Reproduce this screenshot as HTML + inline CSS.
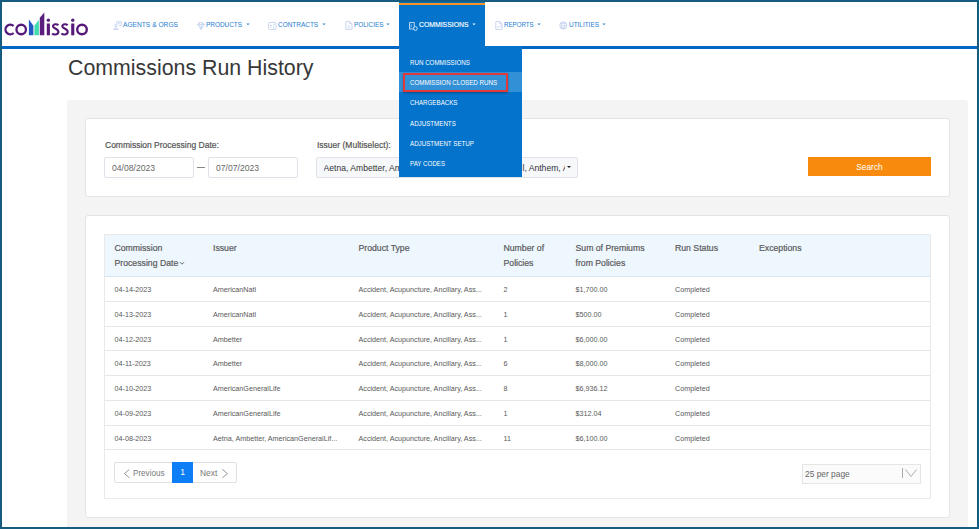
<!DOCTYPE html>
<html><head><meta charset="utf-8">
<style>
*{box-sizing:border-box;margin:0;padding:0}
html,body{width:979px;height:529px;overflow:hidden;background:#fff}
body{font-family:"Liberation Sans",sans-serif;position:relative}
.a{position:absolute;white-space:nowrap}
#frame{position:absolute;left:0;top:0;width:979px;height:529px;border:2px solid #165c80;z-index:50;pointer-events:none}
.nav{font-size:7.3px;color:#2f84d2;top:20.3px;line-height:10px;transform:scaleX(0.9);transform-origin:0 0;-webkit-text-stroke:0.05px #2f84d2}
.ic{position:absolute}
.caret{position:absolute;width:0;height:0;border-left:1.6px solid transparent;border-right:1.6px solid transparent;border-top:2.1px solid #2f84d2;top:23.8px}
.gray{left:67px;top:100px;width:901px;height:440px;background:#f4f4f4;border-radius:3px}
.card{background:#fff;border:1px solid #e4e4e4;border-radius:3px}
.lbl{font-size:8.5px;color:#555;-webkit-text-stroke:0.2px #555;line-height:10px}
.inp{border:1px solid #dfe3e9;border-radius:2px;background:#fff;height:21px;font-size:8.6px;color:#666;line-height:21px;padding-left:7px}
.th{font-size:8.7px;color:#5a5a5a;-webkit-text-stroke:0.2px #5a5a5a;line-height:14.8px}
.td{font-size:7.2px;color:#595959;line-height:10px}
.row{position:absolute;left:105px;width:825px;height:1px;background:#e6e6e6}
.dd{font-size:7px;color:#fff;left:410px;line-height:10px;transform:scaleX(0.885);transform-origin:0 0}
</style></head><body>
<div id="frame"></div>

<!-- header -->
<div class="a" style="left:0;top:46px;width:979px;height:2.6px;background:#0068c4;z-index:9"></div>
<!-- logo -->
<svg class="a" style="left:0;top:0" width="100" height="46" viewBox="0 0 100 46">
  <path d="M13.6 26 A4.8 4.8 0 1 0 13.6 33" fill="none" stroke="#56197a" stroke-width="2.3"/>
  <circle cx="21.2" cy="29.5" r="4.75" fill="none" stroke="#56197a" stroke-width="2.3"/>
  <path d="M28.9 19.4 L33.4 25.8 L33.4 35.3 L28.9 35.3 Z" fill="#2259c2"/>
  <path d="M34.4 25.8 L38.9 19.8 L38.9 35.3 L34.4 35.3 Z" fill="#40dcae"/>
  <path d="M39.8 17.8 L44.3 12.6 L44.3 35.3 L39.8 35.3 Z" fill="#5a1f7c"/>
  <rect x="46.8" y="23.5" width="3.1" height="11.8" fill="#56197a"/>
  <circle cx="48.35" cy="20.2" r="1.65" fill="#56197a"/>
  <rect x="71.2" y="23.5" width="3.1" height="11.8" fill="#56197a"/>
  <circle cx="72.75" cy="20.2" r="1.65" fill="#56197a"/>
  <path d="M58.3 25.2 C57.2 23.9 53.2 23.6 53 26.3 C52.9 28.6 58.4 28.5 58.4 31.8 C58.4 35 53.4 35.1 52.2 33.3" fill="none" stroke="#56197a" stroke-width="2.1"/>
  <path d="M67.6 25.2 C66.5 23.9 62.5 23.6 62.3 26.3 C62.2 28.6 67.7 28.5 67.7 31.8 C67.7 35 62.7 35.1 61.5 33.3" fill="none" stroke="#56197a" stroke-width="2.1"/>
  <circle cx="82" cy="29.5" r="4.8" fill="none" stroke="#56197a" stroke-width="2.4"/>
</svg>

<!-- nav items -->
<svg class="ic" style="left:113px;top:21px" width="9" height="9" viewBox="0 0 9 9"><path d="M3.6 3.6 V0.8 H8.2 V4.8 H5.8" fill="none" stroke="#bccdee" stroke-width="0.8"/><circle cx="5.9" cy="2.6" r="0.8" fill="#bccdee"/><circle cx="2.9" cy="4.6" r="1.2" fill="none" stroke="#bccdee" stroke-width="0.8"/><path d="M0.6 8.4 C0.8 6.4 5 6.4 5.2 8.4 Z" fill="none" stroke="#bccdee" stroke-width="0.8"/></svg>
<div class="a nav" style="left:122.5px;transform:scaleX(0.91)">AGENTS &amp; ORGS</div>

<svg class="ic" style="left:196.5px;top:21.5px" width="8" height="8" viewBox="0 0 8 8"><path d="M0.6 2.6 L2.2 0.7 H5.8 L7.4 2.6 L4 7.3 Z M0.6 2.6 H7.4 M2.6 2.6 L4 7.3 L5.4 2.6 M2.2 0.7 L2.6 2.6 M5.8 0.7 L5.4 2.6" fill="none" stroke="#bccdee" stroke-width="0.7"/></svg>
<div class="a nav" style="left:206px;transform:scaleX(0.88)">PRODUCTS</div>
<svg class="a" style="left:245.9px;top:23.3px" width="4" height="3" viewBox="0 0 4 3"><path d="M0.4 0.4 H3.6 L2 2.3 Z" fill="#2f84d2"/></svg>

<svg class="ic" style="left:268px;top:21.5px" width="9" height="8" viewBox="0 0 9 8"><rect x="0.5" y="0.5" width="7.5" height="7" rx="1" fill="none" stroke="#bccdee" stroke-width="0.8"/><path d="M2 3.4 H4.2 M2 5 H3.6 M5 3 L6.8 2.2" stroke="#bccdee" stroke-width="0.8"/><path d="M5.5 4.2 V7.5" stroke="#bccdee" stroke-width="0.6"/></svg>
<div class="a nav" style="left:278px;transform:scaleX(0.885)">CONTRACTS</div>
<svg class="a" style="left:321.9px;top:23.3px" width="4" height="3" viewBox="0 0 4 3"><path d="M0.4 0.4 H3.6 L2 2.3 Z" fill="#2f84d2"/></svg>

<svg class="ic" style="left:344.5px;top:21px" width="8" height="9" viewBox="0 0 8 9"><path d="M0.8 0.6 H4.8 L7 2.8 V8.4 H0.8 Z M4.8 0.6 V2.8 H7" fill="none" stroke="#bccdee" stroke-width="0.8"/><path d="M2.2 5 H5.4 M2.2 6.6 H5.4" stroke="#bccdee" stroke-width="0.6"/></svg>
<div class="a nav" style="left:354px;transform:scaleX(0.875)">POLICIES</div>
<svg class="a" style="left:386.4px;top:23.3px" width="4" height="3" viewBox="0 0 4 3"><path d="M0.4 0.4 H3.6 L2 2.3 Z" fill="#2f84d2"/></svg>

<!-- active COMMISSIONS -->
<div class="a" style="left:399px;top:2px;width:86px;height:44px;background:#0373cc"></div>
<div class="a" style="left:399px;top:2.5px;width:86px;height:2.8px;background:#f5921e"></div>
<svg class="ic" style="left:408.5px;top:21.5px" width="9" height="9" viewBox="0 0 9 9"><rect x="0.6" y="0.6" width="4.6" height="6.4" fill="none" stroke="#cfe2f6" stroke-width="0.9"/><path d="M2.2 2.4 V5.4" stroke="#cfe2f6" stroke-width="0.7"/><circle cx="6.4" cy="6.5" r="1.9" fill="#0373cc" stroke="#dfeefb" stroke-width="0.9"/></svg>
<div class="a nav" style="left:419px;color:#fff;-webkit-text-stroke:0.15px #fff;transform:scaleX(0.94)">COMMISSIONS</div>
<svg class="a" style="left:471.9px;top:23.3px" width="4" height="3" viewBox="0 0 4 3"><path d="M0.4 0.4 H3.6 L2 2.3 Z" fill="#fff"/></svg>

<svg class="ic" style="left:494.5px;top:21px" width="8" height="9" viewBox="0 0 8 9"><path d="M0.8 0.6 H4.8 L7 2.8 V8.4 H0.8 Z M4.8 0.6 V2.8 H7" fill="none" stroke="#bccdee" stroke-width="0.8"/><path d="M2 7 L3.4 5.2 L4.4 6.2 L5.8 4.4" fill="none" stroke="#bccdee" stroke-width="0.7"/></svg>
<div class="a nav" style="left:504px;transform:scaleX(0.845)">REPORTS</div>
<svg class="a" style="left:536.9px;top:23.3px" width="4" height="3" viewBox="0 0 4 3"><path d="M0.4 0.4 H3.6 L2 2.3 Z" fill="#2f84d2"/></svg>

<svg class="ic" style="left:559px;top:20.8px" width="9" height="9" viewBox="0 0 9 9"><circle cx="4.3" cy="4.5" r="3.6" fill="none" stroke="#bccdee" stroke-width="0.8"/><ellipse cx="4.3" cy="4.5" rx="1.6" ry="3.6" fill="none" stroke="#bccdee" stroke-width="0.6"/><path d="M0.8 4.5 H7.8 M1.3 2.6 H7.3 M1.3 6.4 H7.3" stroke="#bccdee" stroke-width="0.6"/></svg>
<div class="a nav" style="left:569px;transform:scaleX(0.88)">UTILITIES</div>
<svg class="a" style="left:601.9px;top:23.3px" width="4" height="3" viewBox="0 0 4 3"><path d="M0.4 0.4 H3.6 L2 2.3 Z" fill="#2f84d2"/></svg>

<!-- title -->
<div class="a" style="left:67.5px;top:55.1px;font-size:22.2px;color:#383838;line-height:26px;transform:scaleX(0.962);transform-origin:0 0">Commissions Run History</div>

<!-- gray container -->
<div class="a gray"></div>

<!-- filter card -->
<div class="a card" style="left:85px;top:118px;width:865px;height:79px"></div>
<div class="a lbl" style="left:105px;top:139.7px">Commission Processing Date:</div>
<div class="a inp" style="left:104px;top:157px;width:90px">04/08/2023</div>
<div class="a" style="left:197px;top:167px;width:8px;height:1px;background:#888"></div>
<div class="a inp" style="left:208px;top:157px;width:90px">07/07/2023</div>
<div class="a lbl" style="left:317px;top:139.7px">Issuer (Multiselect):</div>
<div class="a inp" style="left:316px;top:157px;width:262px;background:#f7f8fa"></div><div class="a" style="left:323.5px;top:157.8px;width:241.7px;height:21px;line-height:21px;font-size:8.6px;color:#333;overflow:hidden">Aetna, Ambetter, Am<span style="display:inline-block;width:80px"></span><span style="position:absolute;left:199px;top:0">l, Anthem, Aetna</span></div>
<div class="a" style="left:567px;top:166px;width:0;height:0;border-left:2px solid transparent;border-right:2px solid transparent;border-top:2.5px solid #222"></div>
<div class="a" style="left:808px;top:157px;width:123px;height:19.3px;background:#f88b0e;color:#fff;font-size:8.4px;text-align:center;line-height:21px">Search</div>

<!-- dropdown -->
<div class="a" style="left:399px;top:46px;width:123px;height:131px;background:#0373cc;z-index:10"></div>
<div class="a" style="left:399px;top:72px;width:123px;height:20px;background:#3290d6;z-index:11"></div>
<div class="a" style="left:402.5px;top:72.5px;width:105px;height:19px;border:2px solid #e0393a;z-index:12;box-shadow:0 1px 2px rgba(0,0,0,.3)"></div>
<div class="a dd" style="top:57.6px;z-index:13">RUN COMMISSIONS</div>
<div class="a dd" style="top:77.5px;z-index:13">COMMISSION CLOSED RUNS</div>
<div class="a dd" style="top:97.5px;z-index:13">CHARGEBACKS</div>
<div class="a dd" style="top:118.5px;z-index:13">ADJUSTMENTS</div>
<div class="a dd" style="top:138.5px;z-index:13">ADJUSTMENT SETUP</div>
<div class="a dd" style="top:158.5px;z-index:13">PAY CODES</div>

<!-- results card -->
<div class="a card" style="left:85px;top:215px;width:865px;height:303px"></div>
<div class="a" style="left:104px;top:234px;width:827px;height:265px;border:1px solid #e9e9e9"></div>
<div class="a" style="left:105px;top:235px;width:825px;height:41.5px;background:#eef6fe;border-bottom:1px solid #dbe5ee"></div>

<div class="a th" style="left:114.5px;top:241px">Commission<br>Processing Date<svg width="6" height="5" viewBox="0 0 6 5" style="display:inline-block;vertical-align:middle;margin-left:0.5px;margin-top:-1px"><path d="M1 1.2 L3 3.2 L5 1.2" fill="none" stroke="#555" stroke-width="0.9"/></svg></div>
<div class="a th" style="left:213px;top:241px">Issuer</div>
<div class="a th" style="left:358.5px;top:241px">Product Type</div>
<div class="a th" style="left:503.5px;top:241px">Number of<br>Policies</div>
<div class="a th" style="left:575.5px;top:241px">Sum of Premiums<br>from Policies</div>
<div class="a th" style="left:675px;top:241px">Run Status</div>
<div class="a th" style="left:759px;top:241px">Exceptions</div>

<div id="rows">
<div class="row" style="top:300.85px"></div>
<div class="a td" style="left:114.5px;top:285.18px">04-14-2023</div>
<div class="a td" style="left:213px;top:285.18px">AmericanNatl</div>
<div class="a td" style="left:358.5px;top:285.18px">Accident, Acupuncture, Ancillary, Ass...</div>
<div class="a td" style="left:503.5px;top:285.18px">2</div>
<div class="a td" style="left:575.5px;top:285.18px">$1,700.00</div>
<div class="a td" style="left:675px;top:285.18px">Completed</div>
<div class="row" style="top:325.60px"></div>
<div class="a td" style="left:114.5px;top:309.93px">04-13-2023</div>
<div class="a td" style="left:213px;top:309.93px">AmericanNatl</div>
<div class="a td" style="left:358.5px;top:309.93px">Accident, Acupuncture, Ancillary, Ass...</div>
<div class="a td" style="left:503.5px;top:309.93px">1</div>
<div class="a td" style="left:575.5px;top:309.93px">$500.00</div>
<div class="a td" style="left:675px;top:309.93px">Completed</div>
<div class="row" style="top:350.35px"></div>
<div class="a td" style="left:114.5px;top:334.68px">04-12-2023</div>
<div class="a td" style="left:213px;top:334.68px">Ambetter</div>
<div class="a td" style="left:358.5px;top:334.68px">Accident, Acupuncture, Ancillary, Ass...</div>
<div class="a td" style="left:503.5px;top:334.68px">1</div>
<div class="a td" style="left:575.5px;top:334.68px">$6,000.00</div>
<div class="a td" style="left:675px;top:334.68px">Completed</div>
<div class="row" style="top:375.10px"></div>
<div class="a td" style="left:114.5px;top:359.43px">04-11-2023</div>
<div class="a td" style="left:213px;top:359.43px">Ambetter</div>
<div class="a td" style="left:358.5px;top:359.43px">Accident, Acupuncture, Ancillary, Ass...</div>
<div class="a td" style="left:503.5px;top:359.43px">6</div>
<div class="a td" style="left:575.5px;top:359.43px">$8,000.00</div>
<div class="a td" style="left:675px;top:359.43px">Completed</div>
<div class="row" style="top:399.85px"></div>
<div class="a td" style="left:114.5px;top:384.18px">04-10-2023</div>
<div class="a td" style="left:213px;top:384.18px">AmericanGeneralLife</div>
<div class="a td" style="left:358.5px;top:384.18px">Accident, Acupuncture, Ancillary, Ass...</div>
<div class="a td" style="left:503.5px;top:384.18px">8</div>
<div class="a td" style="left:575.5px;top:384.18px">$6,936.12</div>
<div class="a td" style="left:675px;top:384.18px">Completed</div>
<div class="row" style="top:424.60px"></div>
<div class="a td" style="left:114.5px;top:408.93px">04-09-2023</div>
<div class="a td" style="left:213px;top:408.93px">AmericanGeneralLife</div>
<div class="a td" style="left:358.5px;top:408.93px">Accident, Acupuncture, Ancillary, Ass...</div>
<div class="a td" style="left:503.5px;top:408.93px">1</div>
<div class="a td" style="left:575.5px;top:408.93px">$312.04</div>
<div class="a td" style="left:675px;top:408.93px">Completed</div>
<div class="row" style="top:449.35px"></div>
<div class="a td" style="left:114.5px;top:433.68px">04-08-2023</div>
<div class="a td" style="left:213px;top:433.68px">Aetna, Ambetter, AmericanGeneralLif...</div>
<div class="a td" style="left:358.5px;top:433.68px">Accident, Acupuncture, Ancillary, Ass...</div>
<div class="a td" style="left:503.5px;top:433.68px">11</div>
<div class="a td" style="left:575.5px;top:433.68px">$6,100.00</div>
<div class="a td" style="left:675px;top:433.68px">Completed</div>
</div><!--/rows-->

<!-- pagination -->
<div class="a" style="left:114px;top:462px;width:123px;height:21px;border:1px solid #e0e0e0;border-radius:2px"></div>
<div class="a" style="left:172px;top:462px;width:21px;height:21px;background:#0d7ef6;color:#fff;font-size:8.5px;text-align:center;line-height:21px">1</div>
<div class="a" style="left:133px;top:467.9px;font-size:8.8px;color:#777;line-height:10px;transform:scaleX(0.92);transform-origin:0 0">Previous</div>
<div class="a" style="left:200px;top:467.9px;font-size:8.8px;color:#777;line-height:10px;transform:scaleX(0.96);transform-origin:0 0">Next</div>
<svg class="a" style="left:122px;top:467px" width="9" height="12" viewBox="0 0 9 12"><path d="M7.4 2.4 L2.4 6.6 L7.4 10.8" fill="none" stroke="#888" stroke-width="0.9"/></svg>
<svg class="a" style="left:220.5px;top:467px" width="9" height="12" viewBox="0 0 9 12"><path d="M1.4 2.4 L6.4 6.6 L1.4 10.8" fill="none" stroke="#888" stroke-width="0.9"/></svg>

<div class="a" style="left:802px;top:464px;width:119px;height:19.5px;border:1px solid #e5e5e5;background:#fbfbfb"></div>
<div class="a" style="left:805px;top:469px;font-size:8.4px;color:#666;line-height:10px">25 per page</div>
<div class="a" style="left:902px;top:468px;width:1px;height:10px;background:#aaa"></div>
<svg class="a" style="left:905px;top:468px" width="13" height="10" viewBox="0 0 13 10"><path d="M0.5 1.5 L6 8.5 L11.5 1.5" fill="none" stroke="#999" stroke-width="0.8"/></svg>

</body></html>
